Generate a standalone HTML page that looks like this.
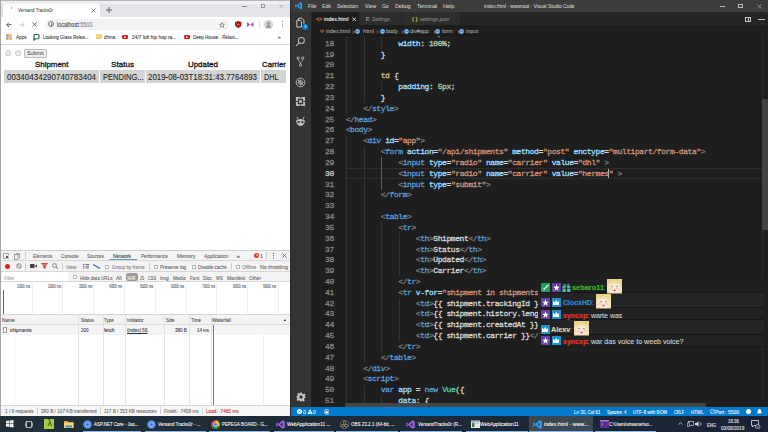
<!DOCTYPE html><html><head><meta charset="utf-8"><style>
*{box-sizing:border-box;margin:0;padding:0}
html,body{width:768px;height:432px;overflow:hidden;background:#1e1e1e;font-family:"Liberation Sans",sans-serif}
.a{position:absolute}
.t{position:absolute;white-space:nowrap;line-height:1;transform-origin:0 0;-webkit-text-stroke:0.08px currentColor}
.m{font-family:"Liberation Mono",monospace;font-size:8px;letter-spacing:-0.42px;white-space:pre;-webkit-text-stroke:0.3px currentColor}
</style></head><body><div class="a" style="left:0.00px;top:0.00px;width:291.00px;height:416.00px;background:#fff"></div>
<div class="a" style="left:0.00px;top:0.00px;width:291.00px;height:16.80px;background:#e3e5e8"></div>
<div class="a" style="left:0.00px;top:1.00px;width:291.00px;height:2.50px;background:#eceef1"></div>
<div class="a" style="left:0.00px;top:0.00px;width:291.00px;height:1.00px;background:#b4b6b9"></div>
<div class="a" style="left:3.00px;top:3.50px;width:97.00px;height:14.00px;background:#fff;border-radius:3px 3px 0 0"></div>
<div class="t" style="left:18.10px;top:7.20px;font-size:6.2px;color:#4a4d51;transform:scaleX(0.727)">Versand Tracks0r</div>
<div class="a" style="left:10.60px;top:7.20px;width:0.90px;height:1.60px;background:#9a9a9a"></div>
<svg class="a" style="left:90.50px;top:7.50px" width="5" height="5" viewBox="0 0 10 10"><path d="M1 1 L9 9 M9 1 L1 9" stroke="#555" stroke-width="1.6"/></svg>
<svg class="a" style="left:105.50px;top:7.00px" width="6" height="6" viewBox="0 0 10 10"><path d="M5 0 V10 M0 5 H10" stroke="#555" stroke-width="1.5"/></svg>
<div class="a" style="left:242.00px;top:6.00px;width:4.60px;height:0.80px;background:#8a8a8a"></div>
<div class="a" style="left:260.80px;top:3.80px;width:4.60px;height:4.60px;background:transparent;border:0.8px solid #999"></div>
<svg class="a" style="left:278.80px;top:3.60px" width="4.6" height="4.6" viewBox="0 0 10 10"><path d="M1 1 L9 9 M9 1 L1 9" stroke="#999" stroke-width="1.1"/></svg>
<svg class="a" style="left:6.00px;top:21.50px" width="6" height="5.5" viewBox="0 0 12 11"><path d="M11 5.5 H2 M6 1 L1.5 5.5 L6 10" fill="none" stroke="#444" stroke-width="1.8"/></svg>
<svg class="a" style="left:19.00px;top:21.50px" width="6" height="5.5" viewBox="0 0 12 11"><path d="M1 5.5 H10 M6 1 L10.5 5.5 L6 10" fill="none" stroke="#b8b8b8" stroke-width="1.5"/></svg>
<svg class="a" style="left:32.00px;top:22.00px" width="5.3" height="5" viewBox="0 0 10 10"><path d="M1 1 L9 9 M9 1 L1 9" stroke="#444" stroke-width="1.6"/></svg>
<div class="a" style="left:44.50px;top:19.00px;width:184.00px;height:10.80px;background:#f1f3f4;border-radius:5.4px"></div>
<div class="a" style="left:48.20px;top:21.40px;width:6.00px;height:6.00px;background:transparent;border:0.8px solid #777;border-radius:50%"></div>
<div class="a" style="left:50.80px;top:23.30px;width:0.70px;height:2.50px;background:#777"></div>
<div class="t" style="left:57.00px;top:22.00px;font-size:6.6px;color:#3c3c3c;transform:scaleX(0.834)">localhost<span style="color:#80868b">:5500</span></div>
<svg class="a" style="left:218.50px;top:21.50px" width="6" height="6" viewBox="0 0 24 24"><path d="M12 2 L15 9 L22 9.5 L16.5 14 L18.5 21.5 L12 17.5 L5.5 21.5 L7.5 14 L2 9.5 L9 9 Z" fill="none" stroke="#555" stroke-width="2.2"/></svg>
<svg class="a" style="left:235.00px;top:21.00px" width="6.5" height="7" viewBox="0 0 12 13"><path d="M6 0 L12 2 V6 C12 10 9 12 6 13 C3 12 0 10 0 6 V2 Z" fill="#b3131b"/><path d="M3 5 L6 8 L9 5" stroke="#fff" stroke-width="1" fill="none"/></svg>
<svg class="a" style="left:247.00px;top:21.50px" width="6.5" height="5" viewBox="0 0 13 10"><path d="M0 0 L6.5 5 L0 10 Z M13 0 L6.5 5 L13 10 Z" fill="#9b59d0"/></svg>
<div class="a" style="left:258.50px;top:20.50px;width:0.80px;height:7.00px;background:#dadce0"></div>
<div class="a" style="left:264.00px;top:20.00px;width:8.50px;height:8.50px;background:#d5d5d5;border-radius:50%"></div>
<div class="a" style="left:266.70px;top:21.50px;width:3.00px;height:3.00px;background:#9a9a9a;border-radius:50%"></div>
<div class="a" style="left:265.50px;top:25.00px;width:5.50px;height:2.50px;background:#9a9a9a;border-radius:3px 3px 0 0"></div>
<div class="a" style="left:281.70px;top:21.00px;width:1.30px;height:1.30px;background:#555;box-shadow:0 2.4px #555,0 4.8px #555;border-radius:50%"></div>
<svg class="a" style="left:6.10px;top:34.00px" width="5.8" height="5.8" viewBox="0 0 3 3"><rect x="0" y="0" width="1" height="1" fill="#ee8a7e"/><rect x="1" y="0" width="1" height="1" fill="#f2b06a"/><rect x="2" y="0" width="1" height="1" fill="#f6c96b"/><rect x="0" y="1" width="1" height="1" fill="#8fb3ee"/><rect x="1" y="1" width="1" height="1" fill="#a2c29a"/><rect x="2" y="1" width="1" height="1" fill="#f2b06a"/><rect x="0" y="2" width="1" height="1" fill="#7bbf8a"/><rect x="1" y="2" width="1" height="1" fill="#e6d27a"/><rect x="2" y="2" width="1" height="1" fill="#ee8a7e"/></svg>
<div class="t" style="left:15.60px;top:34.30px;font-size:6px;color:#303134;transform:scaleX(0.774)">Apps</div>
<svg class="a" style="left:33.00px;top:34.00px" width="6.5" height="6.5" viewBox="0 0 13 13"><path d="M2 11.5 V3 C2 1.5 3 1 4.5 1 H9 C11 1 12 2 12 4 V6.5 C12 8.5 11 9.5 9 9.5 H5 L2 12 Z" fill="none" stroke="#1c6b4c" stroke-width="2.4"/></svg>
<div class="t" style="left:42.50px;top:34.30px;font-size:6px;color:#303134;transform:scaleX(0.754)">Looking Glass Relea...</div>
<div class="a" style="left:95.50px;top:34.30px;width:6.00px;height:5.20px;background:#f6d37b;border-radius:0.5px"></div>
<div class="t" style="left:103.80px;top:34.30px;font-size:6px;color:#303134;transform:scaleX(0.781)">china</div>
<div class="a" style="left:121.80px;top:34.80px;width:6.00px;height:4.50px;background:#e62117;border-radius:1.3px"></div>
<svg class="a" style="left:123.90px;top:35.80px" width="2" height="2.5" viewBox="0 0 2 2.5"><path d="M0 0 L2 1.25 L0 2.5Z" fill="#fff"/></svg>
<div class="t" style="left:131.60px;top:34.30px;font-size:6px;color:#303134;transform:scaleX(0.817)">24/7 lofi hip hop ra...</div>
<div class="a" style="left:184.00px;top:34.80px;width:6.00px;height:4.50px;background:#e62117;border-radius:1.3px"></div>
<svg class="a" style="left:186.10px;top:35.80px" width="2" height="2.5" viewBox="0 0 2 2.5"><path d="M0 0 L2 1.25 L0 2.5Z" fill="#fff"/></svg>
<div class="t" style="left:193.00px;top:34.30px;font-size:6px;color:#303134;transform:scaleX(0.755)">Deep House - Relaxi...</div>
<div class="t" style="left:277.50px;top:34.30px;font-size:6px;color:#555">&#xBB;</div>
<div class="a" style="left:0.00px;top:44.00px;width:291.00px;height:0.90px;background:#dadce0"></div>
<svg class="a" style="left:5.00px;top:50.00px" width="6.4" height="6.4" viewBox="0 0 12 12"><circle cx="6" cy="6" r="5" fill="#ececec" stroke="#b4b4b4" stroke-width="1.3"/></svg>
<svg class="a" style="left:15.40px;top:50.00px" width="6.4" height="6.4" viewBox="0 0 12 12"><circle cx="6" cy="6" r="5" fill="#ececec" stroke="#b4b4b4" stroke-width="1.3"/></svg>
<div class="a" style="left:24.20px;top:49.10px;width:22.70px;height:8.60px;background:#efefef;border:0.8px solid #b9b9b9;border-radius:1px"></div>
<div class="t" style="left:27.40px;top:50.70px;font-size:5.9px;color:#333;-webkit-text-stroke:0;transform:scaleX(0.910)">Submit</div>
<div class="t" style="left:35.00px;top:60.80px;font-size:8px;color:#111;-webkit-text-stroke:0.3px #111;transform:scaleX(0.988)">Shipment</div>
<div class="t" style="left:110.80px;top:60.80px;font-size:8px;color:#111;-webkit-text-stroke:0.3px #111;transform:scaleX(1.012)">Status</div>
<div class="t" style="left:187.70px;top:60.80px;font-size:8px;color:#111;-webkit-text-stroke:0.3px #111;transform:scaleX(0.988)">Updated</div>
<div class="t" style="left:261.90px;top:60.80px;font-size:8px;color:#111;-webkit-text-stroke:0.3px #111;transform:scaleX(0.977)">Carrier</div>
<div class="a" style="left:4.20px;top:69.90px;width:94.80px;height:13.50px;background:#d3d3d3"></div>
<div class="t" style="left:6.90px;top:73.60px;font-size:8.2px;color:#222;transform:scaleX(0.978)">00340434290740783404</div>
<div class="a" style="left:100.00px;top:69.90px;width:44.80px;height:13.50px;background:#d3d3d3"></div>
<div class="t" style="left:102.90px;top:73.60px;font-size:8.2px;color:#222;transform:scaleX(0.918)">PENDING...</div>
<div class="a" style="left:146.00px;top:69.90px;width:113.80px;height:13.50px;background:#d3d3d3"></div>
<div class="t" style="left:147.70px;top:73.60px;font-size:8.2px;color:#222;transform:scaleX(0.965)">2019-08-03T18:31:43.7764893</div>
<div class="a" style="left:261.00px;top:69.90px;width:24.80px;height:13.50px;background:#d3d3d3"></div>
<div class="t" style="left:263.60px;top:73.60px;font-size:8.2px;color:#222;transform:scaleX(0.879)">DHL</div>
<div class="a" style="left:0.00px;top:0.00px;width:1.00px;height:416.00px;background:#a6a6a6"></div>
<div class="a" style="left:1.00px;top:250.00px;width:290.00px;height:166.00px;background:#fff"></div>
<div class="a" style="left:1.00px;top:250.00px;width:290.00px;height:11.00px;background:#f3f3f3;border-top:0.8px solid #cfcfcf;border-bottom:0.8px solid #d6d6d6"></div>
<svg class="a" style="left:3.00px;top:253.00px" width="6.5" height="6" viewBox="0 0 13 12"><path d="M6 11 H1 V1 H11 V5" fill="none" stroke="#6e6e6e" stroke-width="1.2"/><path d="M6 5 L12 8 L9.5 9 L11.5 11.5 L10.5 12 L8.5 9.5 L6.5 11 Z" fill="#333"/></svg>
<svg class="a" style="left:14.00px;top:252.50px" width="6" height="7" viewBox="0 0 12 14"><rect x="1" y="3" width="7" height="10" fill="none" stroke="#6e6e6e" stroke-width="1.2"/><path d="M4 1 H11 V11" fill="none" stroke="#6e6e6e" stroke-width="1.2"/></svg>
<div class="a" style="left:24.50px;top:252.00px;width:0.80px;height:7.00px;background:#ccc"></div>
<div class="t" style="left:32.50px;top:253.90px;font-size:5.4px;color:#5f5f5f;transform:scaleX(0.856)">Elements</div>
<div class="t" style="left:60.75px;top:253.90px;font-size:5.4px;color:#5f5f5f;transform:scaleX(0.872)">Console</div>
<div class="t" style="left:87.00px;top:253.90px;font-size:5.4px;color:#5f5f5f;transform:scaleX(0.859)">Sources</div>
<div class="t" style="left:113.25px;top:253.90px;font-size:5.4px;color:#333;transform:scaleX(0.910)">Network</div>
<div class="t" style="left:140.75px;top:253.90px;font-size:5.4px;color:#5f5f5f;transform:scaleX(0.867)">Performance</div>
<div class="t" style="left:176.50px;top:253.90px;font-size:5.4px;color:#5f5f5f;transform:scaleX(0.937)">Memory</div>
<div class="t" style="left:204.00px;top:253.90px;font-size:5.4px;color:#5f5f5f;transform:scaleX(0.919)">Application</div>
<div class="a" style="left:109.00px;top:259.20px;width:27.50px;height:1.30px;background:#5a95dc"></div>
<div class="t" style="left:236.50px;top:252.90px;font-size:6.2px;color:#444">&#xBB;</div>
<div class="a" style="left:254.40px;top:253.20px;width:4.60px;height:4.60px;background:#e53935;border-radius:50%"></div>
<svg class="a" style="left:255.50px;top:254.30px" width="2.4" height="2.4" viewBox="0 0 4 4"><path d="M0.5 0.5 L3.5 3.5 M3.5 0.5 L0.5 3.5" stroke="#fff" stroke-width="1"/></svg>
<div class="t" style="left:260.00px;top:253.60px;font-size:5.4px;color:#555">1</div>
<div class="a" style="left:265.50px;top:252.00px;width:0.80px;height:7.00px;background:#ccc"></div>
<div class="a" style="left:272.70px;top:252.50px;width:1.10px;height:1.10px;background:#555;box-shadow:0 2.2px #555,0 4.4px #555"></div>
<svg class="a" style="left:282.00px;top:253.00px" width="5" height="5" viewBox="0 0 10 10"><path d="M1 1 L9 9 M9 1 L1 9" stroke="#555" stroke-width="1.5"/></svg>
<div class="a" style="left:1.00px;top:261.00px;width:290.00px;height:10.50px;background:#f3f3f3;border-bottom:0.8px solid #d6d6d6"></div>
<div class="a" style="left:4.50px;top:263.50px;width:5.20px;height:5.20px;background:#e0201e;border-radius:50%"></div>
<svg class="a" style="left:15.50px;top:263.00px" width="6" height="6" viewBox="0 0 12 12"><circle cx="6" cy="6" r="4.6" fill="none" stroke="#555" stroke-width="1.3"/><path d="M2.8 2.8 L9.2 9.2" stroke="#555" stroke-width="1.3"/></svg>
<div class="a" style="left:25.00px;top:262.50px;width:0.80px;height:7.00px;background:#ccc"></div>
<svg class="a" style="left:29.50px;top:264.00px" width="7" height="4" viewBox="0 0 14 8"><rect x="0" y="0" width="9" height="8" rx="1" fill="#444"/><path d="M9 4 L14 1 V7 Z" fill="#444"/></svg>
<svg class="a" style="left:40.50px;top:263.00px" width="7" height="6" viewBox="0 0 14 12"><path d="M0 0 H14 L9 6 V12 L5 10 V6 Z" fill="#d9261c"/><path d="M3 1.5 H11 L7 5.5Z" fill="#fff" opacity="0.5"/></svg>
<svg class="a" style="left:51.50px;top:263.00px" width="6.5" height="6.5" viewBox="0 0 13 13"><circle cx="5" cy="5" r="3.8" fill="none" stroke="#555" stroke-width="1.3"/><path d="M8 8 L12 12" stroke="#555" stroke-width="1.6"/></svg>
<div class="a" style="left:62.00px;top:262.50px;width:0.80px;height:7.00px;background:#ccc"></div>
<div class="t" style="left:66.25px;top:264.50px;font-size:5.4px;color:#808080;transform:scaleX(0.878)">View:</div>
<svg class="a" style="left:82.50px;top:264.00px" width="6" height="4.5" viewBox="0 0 12 9"><path d="M0 1 H3 M5 1 H12 M0 4.5 H3 M5 4.5 H12 M0 8 H3 M5 8 H12" stroke="#555" stroke-width="1.6"/></svg>
<svg class="a" style="left:93.00px;top:263.50px" width="7" height="5" viewBox="0 0 14 10"><path d="M0 1 L14 9" stroke="#2a6fd0" stroke-width="2.2"/></svg>
<div class="a" style="left:104.70px;top:264.50px;width:4.20px;height:4.20px;background:#fff;border:0.7px solid #b8b8b8"></div>
<div class="a" style="left:153.70px;top:264.50px;width:4.20px;height:4.20px;background:#fff;border:0.7px solid #b8b8b8"></div>
<div class="a" style="left:192.20px;top:264.50px;width:4.20px;height:4.20px;background:#fff;border:0.7px solid #b8b8b8"></div>
<div class="a" style="left:236.20px;top:264.50px;width:4.20px;height:4.20px;background:#fff;border:0.7px solid #b8b8b8"></div>
<div class="t" style="left:111.75px;top:264.50px;font-size:5.4px;color:#808080;transform:scaleX(0.874)">Group by frame</div>
<div class="a" style="left:148.50px;top:262.50px;width:0.80px;height:7.00px;background:#ccc"></div>
<div class="t" style="left:160.00px;top:264.50px;font-size:5.4px;color:#5f5f5f;transform:scaleX(0.862)">Preserve log</div>
<div class="t" style="left:197.75px;top:264.50px;font-size:5.4px;color:#5f5f5f;transform:scaleX(0.849)">Disable cache</div>
<div class="a" style="left:231.00px;top:262.50px;width:0.80px;height:7.00px;background:#ccc"></div>
<div class="t" style="left:241.50px;top:264.50px;font-size:5.4px;color:#808080;transform:scaleX(0.920)">Offline</div>
<div class="t" style="left:259.75px;top:264.50px;font-size:5.4px;color:#5f5f5f;transform:scaleX(0.963)">No throttling</div>
<div class="a" style="left:1.00px;top:271.50px;width:290.00px;height:10.50px;background:#f3f3f3;border-bottom:0.8px solid #d6d6d6"></div>
<div class="a" style="left:1.50px;top:272.30px;width:66.00px;height:9.00px;background:#fff"></div>
<div class="t" style="left:3.50px;top:275.80px;font-size:5.4px;color:#a0a0a0;transform:scaleX(0.855)">Filter</div>
<div class="a" style="left:73.20px;top:275.00px;width:4.20px;height:4.20px;background:#fff;border:0.7px solid #b8b8b8"></div>
<div class="t" style="left:79.50px;top:275.80px;font-size:5.4px;color:#5f5f5f;transform:scaleX(0.854)">Hide data URLs</div>
<div class="t" style="left:115.50px;top:275.80px;font-size:5.4px;color:#5f5f5f;transform:scaleX(0.917)">All</div>
<div class="a" style="left:125.50px;top:273.30px;width:12.00px;height:8.00px;background:#999999;border-radius:2.5px"></div>
<div class="t" style="left:127.30px;top:275.80px;font-size:5.4px;color:#fff;transform:scaleX(0.729)">XHR</div>
<div class="t" style="left:140.00px;top:275.80px;font-size:5.4px;color:#5f5f5f;transform:scaleX(0.675)">JS</div>
<div class="t" style="left:148.25px;top:275.80px;font-size:5.4px;color:#5f5f5f;transform:scaleX(0.721)">CSS</div>
<div class="t" style="left:160.00px;top:275.80px;font-size:5.4px;color:#5f5f5f;transform:scaleX(0.972)">Img</div>
<div class="t" style="left:173.00px;top:275.80px;font-size:5.4px;color:#5f5f5f;transform:scaleX(0.851)">Media</div>
<div class="t" style="left:189.75px;top:275.80px;font-size:5.4px;color:#5f5f5f;transform:scaleX(0.857)">Font</div>
<div class="t" style="left:203.25px;top:275.80px;font-size:5.4px;color:#5f5f5f;transform:scaleX(0.912)">Doc</div>
<div class="t" style="left:215.75px;top:275.80px;font-size:5.4px;color:#5f5f5f;transform:scaleX(0.806)">WS</div>
<div class="t" style="left:227.00px;top:275.80px;font-size:5.4px;color:#5f5f5f;transform:scaleX(0.896)">Manifest</div>
<div class="t" style="left:249.00px;top:275.80px;font-size:5.4px;color:#5f5f5f;transform:scaleX(0.890)">Other</div>
<div class="a" style="left:31.50px;top:282.50px;width:0.70px;height:31.50px;background:#efefef"></div>
<div class="t" style="left:17.00px;top:284.60px;font-size:4.6px;color:#555;transform:scaleX(0.755)">1000 ms</div>
<div class="a" style="left:62.30px;top:282.50px;width:0.70px;height:31.50px;background:#efefef"></div>
<div class="t" style="left:47.80px;top:284.60px;font-size:4.6px;color:#555;transform:scaleX(0.755)">2000 ms</div>
<div class="a" style="left:93.10px;top:282.50px;width:0.70px;height:31.50px;background:#efefef"></div>
<div class="t" style="left:78.60px;top:284.60px;font-size:4.6px;color:#555;transform:scaleX(0.755)">3000 ms</div>
<div class="a" style="left:123.90px;top:282.50px;width:0.70px;height:31.50px;background:#efefef"></div>
<div class="t" style="left:109.40px;top:284.60px;font-size:4.6px;color:#555;transform:scaleX(0.755)">4000 ms</div>
<div class="a" style="left:154.70px;top:282.50px;width:0.70px;height:31.50px;background:#efefef"></div>
<div class="t" style="left:140.20px;top:284.60px;font-size:4.6px;color:#555;transform:scaleX(0.755)">5000 ms</div>
<div class="a" style="left:185.50px;top:282.50px;width:0.70px;height:31.50px;background:#efefef"></div>
<div class="t" style="left:171.00px;top:284.60px;font-size:4.6px;color:#555;transform:scaleX(0.755)">6000 ms</div>
<div class="a" style="left:216.30px;top:282.50px;width:0.70px;height:31.50px;background:#efefef"></div>
<div class="t" style="left:201.80px;top:284.60px;font-size:4.6px;color:#555;transform:scaleX(0.755)">7000 ms</div>
<div class="a" style="left:247.10px;top:282.50px;width:0.70px;height:31.50px;background:#efefef"></div>
<div class="t" style="left:232.60px;top:284.60px;font-size:4.6px;color:#555;transform:scaleX(0.755)">8000 ms</div>
<div class="a" style="left:277.90px;top:282.50px;width:0.70px;height:31.50px;background:#efefef"></div>
<div class="t" style="left:263.40px;top:284.60px;font-size:4.6px;color:#555;transform:scaleX(0.755)">9000 ms</div>
<div class="a" style="left:2.60px;top:290.00px;width:0.90px;height:24.00px;background:#5a5fae"></div>
<div class="a" style="left:1.00px;top:313.80px;width:290.00px;height:0.80px;background:#d6d6d6"></div>
<div class="a" style="left:1.00px;top:314.50px;width:290.00px;height:10.50px;background:#f3f3f3;border-bottom:0.8px solid #dcdcdc"></div>
<div class="t" style="left:2.00px;top:317.60px;font-size:5.4px;color:#444;transform:scaleX(0.869)">Name</div>
<div class="t" style="left:80.50px;top:317.60px;font-size:5.4px;color:#444;transform:scaleX(0.834)">Status</div>
<div class="t" style="left:104.00px;top:317.60px;font-size:5.4px;color:#444;transform:scaleX(0.834)">Type</div>
<div class="t" style="left:127.00px;top:317.60px;font-size:5.4px;color:#444;transform:scaleX(0.933)">Initiator</div>
<div class="t" style="left:165.75px;top:317.60px;font-size:5.4px;color:#444;transform:scaleX(0.810)">Size</div>
<div class="t" style="left:191.00px;top:317.60px;font-size:5.4px;color:#444;transform:scaleX(0.849)">Time</div>
<div class="t" style="left:212.25px;top:317.60px;font-size:5.4px;color:#444;transform:scaleX(0.890)">Waterfall</div>
<svg class="a" style="left:282.80px;top:318.60px" width="3.8" height="2.8" viewBox="0 0 10 7"><path d="M0 7 L5 0 L10 7Z" fill="#444"/></svg>
<div class="a" style="left:1.00px;top:325.00px;width:290.00px;height:9.60px;background:#f5f5f5"></div>
<div class="a" style="left:78.20px;top:314.50px;width:0.80px;height:90.50px;background:#e3e3e3"></div>
<div class="a" style="left:102.60px;top:314.50px;width:0.80px;height:90.50px;background:#e3e3e3"></div>
<div class="a" style="left:125.20px;top:314.50px;width:0.80px;height:90.50px;background:#e3e3e3"></div>
<div class="a" style="left:164.30px;top:314.50px;width:0.80px;height:90.50px;background:#e3e3e3"></div>
<div class="a" style="left:188.50px;top:314.50px;width:0.80px;height:90.50px;background:#e3e3e3"></div>
<div class="a" style="left:210.60px;top:314.50px;width:0.80px;height:90.50px;background:#e3e3e3"></div>
<div class="a" style="left:14.00px;top:334.60px;width:0.60px;height:70.00px;background:#f2f2f2"></div>
<div class="a" style="left:263.00px;top:334.60px;width:0.60px;height:70.00px;background:#f0f0f0"></div>
<div class="a" style="left:3.20px;top:326.50px;width:4.30px;height:6.00px;background:#fff;border:0.7px solid #9a9a9a"></div>
<div class="t" style="left:9.50px;top:327.80px;font-size:5.4px;color:#333;transform:scaleX(0.885)">shipments</div>
<div class="t" style="left:80.50px;top:327.80px;font-size:5.4px;color:#333;transform:scaleX(0.833)">200</div>
<div class="t" style="left:104.00px;top:327.80px;font-size:5.4px;color:#333;transform:scaleX(0.898)">fetch</div>
<div class="t" style="left:127.00px;top:327.80px;font-size:5.4px;color:#333;text-decoration:underline;transform:scaleX(0.855)">(index):56</div>
<div class="t" style="left:175.10px;top:327.80px;font-size:5.4px;color:#333;transform:scaleX(0.844)">380 B</div>
<div class="t" style="left:196.50px;top:327.80px;font-size:5.4px;color:#333;transform:scaleX(0.817)">14 ms</div>
<div class="a" style="left:212.60px;top:325.00px;width:0.90px;height:80.00px;background:#8763a6"></div>
<div class="a" style="left:1.00px;top:404.60px;width:290.00px;height:11.40px;background:#f6f6f6;border-top:0.8px solid #d8d8d8"></div>
<div class="t" style="left:4.50px;top:408.50px;font-size:5.4px;color:#5f5f5f;transform:scaleX(0.880)">1 / 9 requests</div>
<div class="t" style="left:40.75px;top:408.50px;font-size:5.4px;color:#5f5f5f;transform:scaleX(0.870)">380 B / 107 KB transferred</div>
<div class="t" style="left:103.75px;top:408.50px;font-size:5.4px;color:#5f5f5f;transform:scaleX(0.860)">117 B / 353 KB resources</div>
<div class="t" style="left:163.75px;top:408.50px;font-size:5.4px;color:#5f5f5f;transform:scaleX(0.866)">Finish: -7458 ms</div>
<div class="t" style="left:206.00px;top:408.50px;font-size:5.4px;color:#c5221f;transform:scaleX(0.867)">Load: -7465 ms</div>
<div class="a" style="left:37.00px;top:407.00px;width:0.80px;height:7.00px;background:#d0d0d0"></div>
<div class="a" style="left:100.00px;top:407.00px;width:0.80px;height:7.00px;background:#d0d0d0"></div>
<div class="a" style="left:160.00px;top:407.00px;width:0.80px;height:7.00px;background:#d0d0d0"></div>
<div class="a" style="left:201.80px;top:407.00px;width:0.80px;height:7.00px;background:#d0d0d0"></div>
<div class="a" style="left:290.00px;top:0.00px;width:478.00px;height:416.00px;background:#1e1e1e"></div>
<div class="a" style="left:290.00px;top:0.00px;width:478.00px;height:12.00px;background:#3c3c3c"></div>
<div class="a" style="left:290.00px;top:0.00px;width:1.20px;height:416.00px;background:#2b2b2b"></div>
<svg class="a" style="left:294.80px;top:2.00px" width="7.5" height="7.5" viewBox="0 0 24 24"><path d="M17.5 0.5 L23.5 3.3 V20.7 L17.5 23.5 L6.8 13.7 L2.2 17.2 L0.5 16.3 V7.7 L2.2 6.8 L6.8 10.3 Z M17.5 6.5 L11.3 12 L17.5 17.5 Z M2.8 9.5 V14.5 L5.3 12 Z" fill="#22a0f0" fill-rule="evenodd"/></svg>
<div class="t" style="left:307.50px;top:3.90px;font-size:5.6px;color:#cccccc;transform:scaleX(0.943)">File</div>
<div class="t" style="left:322.00px;top:3.90px;font-size:5.6px;color:#cccccc;transform:scaleX(0.908)">Edit</div>
<div class="t" style="left:337.00px;top:3.90px;font-size:5.6px;color:#cccccc;transform:scaleX(0.912)">Selection</div>
<div class="t" style="left:364.50px;top:3.90px;font-size:5.6px;color:#cccccc;transform:scaleX(0.935)">View</div>
<div class="t" style="left:381.90px;top:3.90px;font-size:5.6px;color:#cccccc;transform:scaleX(0.884)">Go</div>
<div class="t" style="left:394.50px;top:3.90px;font-size:5.6px;color:#cccccc;transform:scaleX(0.940)">Debug</div>
<div class="t" style="left:416.50px;top:3.90px;font-size:5.6px;color:#cccccc;transform:scaleX(0.946)">Terminal</div>
<div class="t" style="left:442.75px;top:3.90px;font-size:5.6px;color:#cccccc;transform:scaleX(0.977)">Help</div>
<div class="t" style="left:484.00px;top:3.90px;font-size:5.6px;color:#cccccc;transform:scaleX(0.865)">index.html - wwwroot - Visual Studio Code</div>
<div class="a" style="left:719.50px;top:5.60px;width:5.00px;height:0.90px;background:#bbb"></div>
<div class="a" style="left:738.00px;top:3.50px;width:4.80px;height:4.80px;background:transparent;border:0.9px solid #bbb"></div>
<svg class="a" style="left:756.50px;top:3.50px" width="5" height="5" viewBox="0 0 10 10"><path d="M1 1 L9 9 M9 1 L1 9" stroke="#bbb" stroke-width="1.3"/></svg>
<div class="a" style="left:291.00px;top:12.00px;width:20.00px;height:394.70px;background:#333333"></div>
<svg class="a" style="left:295.00px;top:17.00px" width="11" height="11" viewBox="0 0 24 24"><path d="M8 7 V2.5 H14.5 L19.5 7.5 V15" fill="none" stroke="#dcdcdc" stroke-width="2"/><path d="M4 7 H11 L14 10 V22 H4 Z" fill="none" stroke="#dcdcdc" stroke-width="2"/></svg>
<div class="a" style="left:302.20px;top:24.30px;width:6.20px;height:6.20px;background:#007acc;border-radius:50%"></div>
<div class="t" style="left:304.30px;top:25.40px;font-size:4px;color:#fff">1</div>
<svg class="a" style="left:295.00px;top:35.50px" width="11" height="11" viewBox="0 0 24 24"><circle cx="14" cy="10" r="6.5" fill="none" stroke="#bdbdbd" stroke-width="2.2"/><path d="M9.5 14.5 L2.5 21.5" stroke="#bdbdbd" stroke-width="2.6"/></svg>
<svg class="a" style="left:295.00px;top:55.50px" width="11" height="11" viewBox="0 0 24 24"><circle cx="7" cy="4.5" r="2.5" fill="none" stroke="#bdbdbd" stroke-width="1.8"/><circle cx="17" cy="4.5" r="2.5" fill="none" stroke="#bdbdbd" stroke-width="1.8"/><circle cx="12" cy="20" r="2.5" fill="none" stroke="#bdbdbd" stroke-width="1.8"/><path d="M7 7 C7 12 12 12 12 17.5 M17 7 C17 12 12 12 12 17.5" fill="none" stroke="#bdbdbd" stroke-width="1.8"/></svg>
<svg class="a" style="left:295.00px;top:76.50px" width="11" height="11" viewBox="0 0 24 24"><circle cx="12" cy="12" r="9.5" fill="none" stroke="#bdbdbd" stroke-width="2"/><path d="M5.3 5.3 L18.7 18.7" stroke="#bdbdbd" stroke-width="1.8"/><circle cx="12" cy="12" r="4.5" fill="none" stroke="#bdbdbd" stroke-width="1.8"/><path d="M12 5 V19 M5 12 H19" stroke="#bdbdbd" stroke-width="1.2"/></svg>
<svg class="a" style="left:295.00px;top:95.50px" width="11" height="11" viewBox="0 0 24 24"><path d="M2 2 H22 V22 H2 Z M6 6 V18 H18 V6 Z" fill="#bdbdbd" fill-rule="evenodd"/><rect x="9" y="9" width="6" height="6" fill="#bdbdbd"/><path d="M12 0 V5 M12 19 V24 M0 12 H5 M19 12 H24" stroke="#333" stroke-width="2.5"/></svg>
<svg class="a" style="left:295.00px;top:115.50px" width="11" height="11" viewBox="0 0 24 24"><path d="M2.5 11 C2.5 5 21.5 5 21.5 11 C21.5 17.5 15.5 22 12 22 C8.5 22 2.5 17.5 2.5 11 Z" fill="#bdbdbd"/><path d="M6.5 6.5 L4 1.5 M17.5 6.5 L20 1.5" stroke="#bdbdbd" stroke-width="2"/><ellipse cx="8" cy="13" rx="2.8" ry="2.2" fill="#333"/><ellipse cx="16" cy="13" rx="2.8" ry="2.2" fill="#333"/></svg>
<svg class="a" style="left:295.50px;top:392.00px" width="10" height="10" viewBox="0 0 24 24"><path d="M10 1 H14 L14.7 4.3 L17.3 5.4 L20.1 3.5 L22.9 6.4 L21.1 9.2 L22.1 11.8 L23.5 12 V14 L20.5 14.5 L19.5 17.3 L21.1 20.1 L18.3 22.9 L15.5 21.1 L13 22.1 L12.5 23.5 H10.5 L9.8 20.5 L7.2 19.5 L4.4 21.3 L1.6 18.5 L3.4 15.7 L2.4 13.2 L0.5 12.7 V10.5 L3.5 9.8 L4.5 7.2 L2.7 4.4 L5.5 1.6 L8.3 3.4 L10.8 2.4 Z" fill="#c5c5c5"/><circle cx="12" cy="12" r="4" fill="#333"/></svg>
<div class="a" style="left:311.00px;top:12.00px;width:457.00px;height:13.40px;background:#252526"></div>
<div class="a" style="left:311.50px;top:12.00px;width:47.50px;height:13.40px;background:#1e1e1e"></div>
<div class="a" style="left:359.20px;top:12.00px;width:42.30px;height:13.40px;background:#2d2d2d"></div>
<div class="a" style="left:402.20px;top:12.00px;width:57.40px;height:13.40px;background:#2d2d2d"></div>
<div class="t" style="left:315.50px;top:16.70px;font-size:5.5px;color:#e37933;font-weight:bold;transform:scaleX(0.932)">&lt;&gt;</div>
<div class="t" style="left:323.50px;top:16.70px;font-size:5.7px;color:#ffffff;transform:scaleX(0.945)">index.html</div>
<svg class="a" style="left:351.50px;top:16.80px" width="4.5" height="4.5" viewBox="0 0 10 10"><path d="M1 1 L9 9 M9 1 L1 9" stroke="#e0e0e0" stroke-width="2"/></svg>
<svg class="a" style="left:365.80px;top:16.50px" width="4.2" height="4.5" viewBox="0 0 8 9"><path d="M0 1 H8 M0 4.5 H6 M0 8 H8" stroke="#9a9a9a" stroke-width="1.4"/><path d="M1 0 V9" stroke="#9a9a9a" stroke-width="1.4"/></svg>
<div class="t" style="left:371.50px;top:16.70px;font-size:5.7px;color:#8b8b8b;font-style:italic;transform:scaleX(0.880)">Settings</div>
<div class="t" style="left:412.00px;top:16.50px;font-size:5.7px;color:#cbcb41;font-weight:bold;transform:scaleX(0.914)">{ }</div>
<div class="t" style="left:419.80px;top:16.70px;font-size:5.7px;color:#8b8b8b;transform:scaleX(0.930)">settings.json</div>
<div class="a" style="left:745.00px;top:17.00px;width:6.40px;height:5.40px;background:transparent;border:0.9px solid #c5c5c5;border-top-width:1.4px"></div>
<div class="a" style="left:747.80px;top:17.00px;width:0.90px;height:5.40px;background:#c5c5c5"></div>
<div class="a" style="left:757.50px;top:18.70px;width:7.00px;height:1.30px;background:#c5c5c5"></div>
<div class="a" style="left:311.00px;top:25.40px;width:457.00px;height:10.00px;background:#1e1e1e"></div>
<div class="a" style="left:311.00px;top:34.80px;width:451.00px;height:1.20px;background:#151515;opacity:0.6"></div>
<div class="t" style="left:319.80px;top:28.90px;font-size:5.2px;color:#e37933;font-weight:bold;transform:scaleX(0.627)">&lt;&gt;</div>
<div class="t" style="left:325.60px;top:28.90px;font-size:5.6px;color:#a9a9a9;transform:scaleX(0.941)">index.html</div>
<svg class="a" style="left:351.50px;top:29.50px" width="3" height="4" viewBox="0 0 6 8"><path d="M1.5 1 L4.5 4 L1.5 7" fill="none" stroke="#a9a9a9" stroke-width="1.3"/></svg>
<div class="t" style="left:362.50px;top:28.90px;font-size:5.6px;color:#a9a9a9;transform:scaleX(1.040)">html</div>
<svg class="a" style="left:376.00px;top:29.50px" width="3" height="4" viewBox="0 0 6 8"><path d="M1.5 1 L4.5 4 L1.5 7" fill="none" stroke="#a9a9a9" stroke-width="1.3"/></svg>
<div class="t" style="left:386.00px;top:28.90px;font-size:5.6px;color:#a9a9a9;transform:scaleX(0.968)">body</div>
<svg class="a" style="left:401.00px;top:29.50px" width="3" height="4" viewBox="0 0 6 8"><path d="M1.5 1 L4.5 4 L1.5 7" fill="none" stroke="#a9a9a9" stroke-width="1.3"/></svg>
<div class="t" style="left:410.25px;top:28.90px;font-size:5.6px;color:#a9a9a9;transform:scaleX(0.956)">div#app</div>
<svg class="a" style="left:433.00px;top:29.50px" width="3" height="4" viewBox="0 0 6 8"><path d="M1.5 1 L4.5 4 L1.5 7" fill="none" stroke="#a9a9a9" stroke-width="1.3"/></svg>
<div class="t" style="left:442.00px;top:28.90px;font-size:5.6px;color:#a9a9a9;transform:scaleX(0.961)">form</div>
<svg class="a" style="left:456.50px;top:29.50px" width="3" height="4" viewBox="0 0 6 8"><path d="M1.5 1 L4.5 4 L1.5 7" fill="none" stroke="#a9a9a9" stroke-width="1.3"/></svg>
<div class="t" style="left:465.75px;top:28.90px;font-size:5.6px;color:#a9a9a9;transform:scaleX(0.988)">input</div>
<svg class="a" style="left:355.00px;top:28.70px" width="5" height="5" viewBox="0 0 10 10"><circle cx="5" cy="5" r="4.8" fill="#75beff"/><path d="M1.5 3.5 L5 5.5 L8.5 3.5" fill="none" stroke="#1e1e1e" stroke-width="1"/></svg>
<svg class="a" style="left:379.50px;top:28.70px" width="5" height="5" viewBox="0 0 10 10"><circle cx="5" cy="5" r="4.8" fill="#75beff"/><path d="M1.5 3.5 L5 5.5 L8.5 3.5" fill="none" stroke="#1e1e1e" stroke-width="1"/></svg>
<svg class="a" style="left:404.00px;top:28.70px" width="5" height="5" viewBox="0 0 10 10"><circle cx="5" cy="5" r="4.8" fill="#75beff"/><path d="M1.5 3.5 L5 5.5 L8.5 3.5" fill="none" stroke="#1e1e1e" stroke-width="1"/></svg>
<svg class="a" style="left:435.25px;top:28.70px" width="5" height="5" viewBox="0 0 10 10"><circle cx="5" cy="5" r="4.8" fill="#75beff"/><path d="M1.5 3.5 L5 5.5 L8.5 3.5" fill="none" stroke="#1e1e1e" stroke-width="1"/></svg>
<svg class="a" style="left:459.00px;top:28.70px" width="5" height="5" viewBox="0 0 10 10"><circle cx="5" cy="5" r="4.8" fill="#75beff"/><path d="M1.5 3.5 L5 5.5 L8.5 3.5" fill="none" stroke="#1e1e1e" stroke-width="1"/></svg>
<div class="a" style="left:311px;top:36px;width:451px;height:367px;overflow:hidden">
<div class="a" style="left:34.50px;top:132.00px;width:416.50px;height:10.83px;background:transparent;border-top:0.8px solid #2e2e2e;border-bottom:0.8px solid #2e2e2e"></div>
<div class="a" style="left:35.00px;top:-8.79px;width:0.80px;height:10.93px;background:#333333"></div>
<div class="a" style="left:52.52px;top:-8.79px;width:0.80px;height:10.93px;background:#333333"></div>
<div class="a" style="left:70.04px;top:-8.79px;width:0.80px;height:10.93px;background:#333333"></div>
<div class="a" style="left:35.00px;top:2.04px;width:0.80px;height:10.93px;background:#333333"></div>
<div class="a" style="left:52.52px;top:2.04px;width:0.80px;height:10.93px;background:#333333"></div>
<div class="a" style="left:70.04px;top:2.04px;width:0.80px;height:10.93px;background:#333333"></div>
<div class="a" style="left:35.00px;top:12.87px;width:0.80px;height:10.93px;background:#333333"></div>
<div class="a" style="left:52.52px;top:12.87px;width:0.80px;height:10.93px;background:#333333"></div>
<div class="a" style="left:35.00px;top:23.70px;width:0.80px;height:10.93px;background:#333333"></div>
<div class="a" style="left:52.52px;top:23.70px;width:0.80px;height:10.93px;background:#333333"></div>
<div class="a" style="left:35.00px;top:34.53px;width:0.80px;height:10.93px;background:#333333"></div>
<div class="a" style="left:52.52px;top:34.53px;width:0.80px;height:10.93px;background:#333333"></div>
<div class="a" style="left:35.00px;top:45.36px;width:0.80px;height:10.93px;background:#333333"></div>
<div class="a" style="left:52.52px;top:45.36px;width:0.80px;height:10.93px;background:#333333"></div>
<div class="a" style="left:70.04px;top:45.36px;width:0.80px;height:10.93px;background:#333333"></div>
<div class="a" style="left:35.00px;top:56.19px;width:0.80px;height:10.93px;background:#333333"></div>
<div class="a" style="left:52.52px;top:56.19px;width:0.80px;height:10.93px;background:#333333"></div>
<div class="a" style="left:35.00px;top:67.02px;width:0.80px;height:10.93px;background:#333333"></div>
<div class="a" style="left:35.00px;top:99.51px;width:0.80px;height:10.93px;background:#333333"></div>
<div class="a" style="left:35.00px;top:110.34px;width:0.80px;height:10.93px;background:#333333"></div>
<div class="a" style="left:52.52px;top:110.34px;width:0.80px;height:10.93px;background:#333333"></div>
<div class="a" style="left:35.00px;top:121.17px;width:0.80px;height:10.93px;background:#333333"></div>
<div class="a" style="left:52.52px;top:121.17px;width:0.80px;height:10.93px;background:#333333"></div>
<div class="a" style="left:70.04px;top:121.17px;width:0.80px;height:10.93px;background:#606060"></div>
<div class="a" style="left:35.00px;top:132.00px;width:0.80px;height:10.93px;background:#333333"></div>
<div class="a" style="left:52.52px;top:132.00px;width:0.80px;height:10.93px;background:#333333"></div>
<div class="a" style="left:70.04px;top:132.00px;width:0.80px;height:10.93px;background:#606060"></div>
<div class="a" style="left:35.00px;top:142.83px;width:0.80px;height:10.93px;background:#333333"></div>
<div class="a" style="left:52.52px;top:142.83px;width:0.80px;height:10.93px;background:#333333"></div>
<div class="a" style="left:70.04px;top:142.83px;width:0.80px;height:10.93px;background:#606060"></div>
<div class="a" style="left:35.00px;top:153.66px;width:0.80px;height:10.93px;background:#333333"></div>
<div class="a" style="left:52.52px;top:153.66px;width:0.80px;height:10.93px;background:#333333"></div>
<div class="a" style="left:35.00px;top:164.49px;width:0.80px;height:10.93px;background:#333333"></div>
<div class="a" style="left:52.52px;top:164.49px;width:0.80px;height:10.93px;background:#333333"></div>
<div class="a" style="left:35.00px;top:175.32px;width:0.80px;height:10.93px;background:#333333"></div>
<div class="a" style="left:52.52px;top:175.32px;width:0.80px;height:10.93px;background:#333333"></div>
<div class="a" style="left:35.00px;top:186.15px;width:0.80px;height:10.93px;background:#333333"></div>
<div class="a" style="left:52.52px;top:186.15px;width:0.80px;height:10.93px;background:#333333"></div>
<div class="a" style="left:70.04px;top:186.15px;width:0.80px;height:10.93px;background:#333333"></div>
<div class="a" style="left:35.00px;top:196.98px;width:0.80px;height:10.93px;background:#333333"></div>
<div class="a" style="left:52.52px;top:196.98px;width:0.80px;height:10.93px;background:#333333"></div>
<div class="a" style="left:70.04px;top:196.98px;width:0.80px;height:10.93px;background:#333333"></div>
<div class="a" style="left:87.56px;top:196.98px;width:0.80px;height:10.93px;background:#333333"></div>
<div class="a" style="left:35.00px;top:207.81px;width:0.80px;height:10.93px;background:#333333"></div>
<div class="a" style="left:52.52px;top:207.81px;width:0.80px;height:10.93px;background:#333333"></div>
<div class="a" style="left:70.04px;top:207.81px;width:0.80px;height:10.93px;background:#333333"></div>
<div class="a" style="left:87.56px;top:207.81px;width:0.80px;height:10.93px;background:#333333"></div>
<div class="a" style="left:35.00px;top:218.64px;width:0.80px;height:10.93px;background:#333333"></div>
<div class="a" style="left:52.52px;top:218.64px;width:0.80px;height:10.93px;background:#333333"></div>
<div class="a" style="left:70.04px;top:218.64px;width:0.80px;height:10.93px;background:#333333"></div>
<div class="a" style="left:87.56px;top:218.64px;width:0.80px;height:10.93px;background:#333333"></div>
<div class="a" style="left:35.00px;top:229.47px;width:0.80px;height:10.93px;background:#333333"></div>
<div class="a" style="left:52.52px;top:229.47px;width:0.80px;height:10.93px;background:#333333"></div>
<div class="a" style="left:70.04px;top:229.47px;width:0.80px;height:10.93px;background:#333333"></div>
<div class="a" style="left:87.56px;top:229.47px;width:0.80px;height:10.93px;background:#333333"></div>
<div class="a" style="left:35.00px;top:240.30px;width:0.80px;height:10.93px;background:#333333"></div>
<div class="a" style="left:52.52px;top:240.30px;width:0.80px;height:10.93px;background:#333333"></div>
<div class="a" style="left:70.04px;top:240.30px;width:0.80px;height:10.93px;background:#333333"></div>
<div class="a" style="left:35.00px;top:251.13px;width:0.80px;height:10.93px;background:#333333"></div>
<div class="a" style="left:52.52px;top:251.13px;width:0.80px;height:10.93px;background:#333333"></div>
<div class="a" style="left:70.04px;top:251.13px;width:0.80px;height:10.93px;background:#333333"></div>
<div class="a" style="left:35.00px;top:261.96px;width:0.80px;height:10.93px;background:#333333"></div>
<div class="a" style="left:52.52px;top:261.96px;width:0.80px;height:10.93px;background:#333333"></div>
<div class="a" style="left:70.04px;top:261.96px;width:0.80px;height:10.93px;background:#333333"></div>
<div class="a" style="left:87.56px;top:261.96px;width:0.80px;height:10.93px;background:#333333"></div>
<div class="a" style="left:35.00px;top:272.79px;width:0.80px;height:10.93px;background:#333333"></div>
<div class="a" style="left:52.52px;top:272.79px;width:0.80px;height:10.93px;background:#333333"></div>
<div class="a" style="left:70.04px;top:272.79px;width:0.80px;height:10.93px;background:#333333"></div>
<div class="a" style="left:87.56px;top:272.79px;width:0.80px;height:10.93px;background:#333333"></div>
<div class="a" style="left:35.00px;top:283.62px;width:0.80px;height:10.93px;background:#333333"></div>
<div class="a" style="left:52.52px;top:283.62px;width:0.80px;height:10.93px;background:#333333"></div>
<div class="a" style="left:70.04px;top:283.62px;width:0.80px;height:10.93px;background:#333333"></div>
<div class="a" style="left:87.56px;top:283.62px;width:0.80px;height:10.93px;background:#333333"></div>
<div class="a" style="left:35.00px;top:294.45px;width:0.80px;height:10.93px;background:#333333"></div>
<div class="a" style="left:52.52px;top:294.45px;width:0.80px;height:10.93px;background:#333333"></div>
<div class="a" style="left:70.04px;top:294.45px;width:0.80px;height:10.93px;background:#333333"></div>
<div class="a" style="left:87.56px;top:294.45px;width:0.80px;height:10.93px;background:#333333"></div>
<div class="a" style="left:35.00px;top:305.28px;width:0.80px;height:10.93px;background:#333333"></div>
<div class="a" style="left:52.52px;top:305.28px;width:0.80px;height:10.93px;background:#333333"></div>
<div class="a" style="left:70.04px;top:305.28px;width:0.80px;height:10.93px;background:#333333"></div>
<div class="a" style="left:35.00px;top:316.11px;width:0.80px;height:10.93px;background:#333333"></div>
<div class="a" style="left:52.52px;top:316.11px;width:0.80px;height:10.93px;background:#333333"></div>
<div class="a" style="left:35.00px;top:326.94px;width:0.80px;height:10.93px;background:#333333"></div>
<div class="a" style="left:35.00px;top:337.77px;width:0.80px;height:10.93px;background:#333333"></div>
<div class="a" style="left:35.00px;top:348.60px;width:0.80px;height:10.93px;background:#333333"></div>
<div class="a" style="left:52.52px;top:348.60px;width:0.80px;height:10.93px;background:#333333"></div>
<div class="a" style="left:35.00px;top:359.43px;width:0.80px;height:10.93px;background:#333333"></div>
<div class="a" style="left:52.52px;top:359.43px;width:0.80px;height:10.93px;background:#333333"></div>
<div class="a" style="left:70.04px;top:359.43px;width:0.80px;height:10.93px;background:#333333"></div>
<div class="a" style="left:35.00px;top:370.26px;width:0.80px;height:10.93px;background:#333333"></div>
<div class="a" style="left:52.52px;top:370.26px;width:0.80px;height:10.93px;background:#333333"></div>
<div class="a" style="left:70.04px;top:370.26px;width:0.80px;height:10.93px;background:#333333"></div>
<div class="a" style="left:87.56px;top:370.26px;width:0.80px;height:10.93px;background:#333333"></div>
<div class="t m" style="left:-1.1999999999999886px;top:-7.09px;width:24px;text-align:right;font-weight:normal;color:#858585">17</div>
<div class="t m" style="left:34.70px;top:-7.09px"><span style="color:#d4d4d4">            </span><span style="color:#9cdcfe">border</span><span style="color:#d4d4d4">: </span><span style="color:#b5cea8">1px</span><span style="color:#d4d4d4">;</span></div>
<div class="t m" style="left:-1.1999999999999886px;top:3.74px;width:24px;text-align:right;font-weight:normal;color:#858585">18</div>
<div class="t m" style="left:34.70px;top:3.74px"><span style="color:#d4d4d4">            </span><span style="color:#9cdcfe">width</span><span style="color:#d4d4d4">: </span><span style="color:#b5cea8">100%</span><span style="color:#d4d4d4">;</span></div>
<div class="t m" style="left:-1.1999999999999886px;top:14.57px;width:24px;text-align:right;font-weight:normal;color:#858585">19</div>
<div class="t m" style="left:34.70px;top:14.57px"><span style="color:#d4d4d4">        }</span></div>
<div class="t m" style="left:-1.1999999999999886px;top:25.40px;width:24px;text-align:right;font-weight:normal;color:#858585">20</div>
<div class="t m" style="left:34.70px;top:25.40px"></div>
<div class="t m" style="left:-1.1999999999999886px;top:36.23px;width:24px;text-align:right;font-weight:normal;color:#858585">21</div>
<div class="t m" style="left:34.70px;top:36.23px"><span style="color:#d4d4d4">        </span><span style="color:#d7ba7d">td</span><span style="color:#d4d4d4"> {</span></div>
<div class="t m" style="left:-1.1999999999999886px;top:47.06px;width:24px;text-align:right;font-weight:normal;color:#858585">22</div>
<div class="t m" style="left:34.70px;top:47.06px"><span style="color:#d4d4d4">            </span><span style="color:#9cdcfe">padding</span><span style="color:#d4d4d4">: </span><span style="color:#b5cea8">5px</span><span style="color:#d4d4d4">;</span></div>
<div class="t m" style="left:-1.1999999999999886px;top:57.89px;width:24px;text-align:right;font-weight:normal;color:#858585">23</div>
<div class="t m" style="left:34.70px;top:57.89px"><span style="color:#d4d4d4">        }</span></div>
<div class="t m" style="left:-1.1999999999999886px;top:68.72px;width:24px;text-align:right;font-weight:normal;color:#858585">24</div>
<div class="t m" style="left:34.70px;top:68.72px"><span style="color:#d4d4d4">    </span><span style="color:#808080">&lt;/</span><span style="color:#569cd6">style</span><span style="color:#808080">&gt;</span></div>
<div class="t m" style="left:-1.1999999999999886px;top:79.55px;width:24px;text-align:right;font-weight:normal;color:#858585">25</div>
<div class="t m" style="left:34.70px;top:79.55px"><span style="color:#808080">&lt;/</span><span style="color:#569cd6">head</span><span style="color:#808080">&gt;</span></div>
<div class="t m" style="left:-1.1999999999999886px;top:90.38px;width:24px;text-align:right;font-weight:normal;color:#858585">26</div>
<div class="t m" style="left:34.70px;top:90.38px"><span style="color:#808080">&lt;</span><span style="color:#569cd6">body</span><span style="color:#808080">&gt;</span></div>
<div class="t m" style="left:-1.1999999999999886px;top:101.21px;width:24px;text-align:right;font-weight:normal;color:#858585">27</div>
<div class="t m" style="left:34.70px;top:101.21px"><span style="color:#d4d4d4">    </span><span style="color:#808080">&lt;</span><span style="color:#569cd6">div</span><span style="color:#d4d4d4"> </span><span style="color:#9cdcfe">id</span><span style="color:#d4d4d4">=</span><span style="color:#ce9178">"app"</span><span style="color:#808080">&gt;</span></div>
<div class="t m" style="left:-1.1999999999999886px;top:112.04px;width:24px;text-align:right;font-weight:normal;color:#858585">28</div>
<div class="t m" style="left:34.70px;top:112.04px"><span style="color:#d4d4d4">        </span><span style="color:#808080">&lt;</span><span style="color:#569cd6">form</span><span style="color:#d4d4d4"> </span><span style="color:#9cdcfe">action</span><span style="color:#d4d4d4">=</span><span style="color:#ce9178">"/api/shipments"</span><span style="color:#d4d4d4"> </span><span style="color:#9cdcfe">method</span><span style="color:#d4d4d4">=</span><span style="color:#ce9178">"post"</span><span style="color:#d4d4d4"> </span><span style="color:#9cdcfe">enctype</span><span style="color:#d4d4d4">=</span><span style="color:#ce9178">"multipart/form-data"</span><span style="color:#808080">&gt;</span></div>
<div class="t m" style="left:-1.1999999999999886px;top:122.87px;width:24px;text-align:right;font-weight:normal;color:#858585">29</div>
<div class="t m" style="left:34.70px;top:122.87px"><span style="color:#d4d4d4">            </span><span style="color:#808080">&lt;</span><span style="color:#569cd6">input</span><span style="color:#d4d4d4"> </span><span style="color:#9cdcfe">type</span><span style="color:#d4d4d4">=</span><span style="color:#ce9178">"radio"</span><span style="color:#d4d4d4"> </span><span style="color:#9cdcfe">name</span><span style="color:#d4d4d4">=</span><span style="color:#ce9178">"carrier"</span><span style="color:#d4d4d4"> </span><span style="color:#9cdcfe">value</span><span style="color:#d4d4d4">=</span><span style="color:#ce9178">"dhl"</span><span style="color:#d4d4d4"> </span><span style="color:#808080">&gt;</span></div>
<div class="t m" style="left:-1.1999999999999886px;top:133.70px;width:24px;text-align:right;font-weight:normal;color:#c6c6c6">30</div>
<div class="t m" style="left:34.70px;top:133.70px"><span style="color:#d4d4d4">            </span><span style="color:#808080">&lt;</span><span style="color:#569cd6">input</span><span style="color:#d4d4d4"> </span><span style="color:#9cdcfe">type</span><span style="color:#d4d4d4">=</span><span style="color:#ce9178">"radio"</span><span style="color:#d4d4d4"> </span><span style="color:#9cdcfe">name</span><span style="color:#d4d4d4">=</span><span style="color:#ce9178">"carrier"</span><span style="color:#d4d4d4"> </span><span style="color:#9cdcfe">value</span><span style="color:#d4d4d4">=</span><span style="color:#ce9178">"hermes"</span><span style="color:#d4d4d4"> </span><span style="color:#808080">&gt;</span></div>
<div class="t m" style="left:-1.1999999999999886px;top:144.53px;width:24px;text-align:right;font-weight:normal;color:#858585">31</div>
<div class="t m" style="left:34.70px;top:144.53px"><span style="color:#d4d4d4">            </span><span style="color:#808080">&lt;</span><span style="color:#569cd6">input</span><span style="color:#d4d4d4"> </span><span style="color:#9cdcfe">type</span><span style="color:#d4d4d4">=</span><span style="color:#ce9178">"submit"</span><span style="color:#808080">&gt;</span></div>
<div class="t m" style="left:-1.1999999999999886px;top:155.36px;width:24px;text-align:right;font-weight:normal;color:#858585">32</div>
<div class="t m" style="left:34.70px;top:155.36px"><span style="color:#d4d4d4">        </span><span style="color:#808080">&lt;/</span><span style="color:#569cd6">form</span><span style="color:#808080">&gt;</span></div>
<div class="t m" style="left:-1.1999999999999886px;top:166.19px;width:24px;text-align:right;font-weight:normal;color:#858585">33</div>
<div class="t m" style="left:34.70px;top:166.19px"></div>
<div class="t m" style="left:-1.1999999999999886px;top:177.02px;width:24px;text-align:right;font-weight:normal;color:#858585">34</div>
<div class="t m" style="left:34.70px;top:177.02px"><span style="color:#d4d4d4">        </span><span style="color:#808080">&lt;</span><span style="color:#569cd6">table</span><span style="color:#808080">&gt;</span></div>
<div class="t m" style="left:-1.1999999999999886px;top:187.85px;width:24px;text-align:right;font-weight:normal;color:#858585">35</div>
<div class="t m" style="left:34.70px;top:187.85px"><span style="color:#d4d4d4">            </span><span style="color:#808080">&lt;</span><span style="color:#569cd6">tr</span><span style="color:#808080">&gt;</span></div>
<div class="t m" style="left:-1.1999999999999886px;top:198.68px;width:24px;text-align:right;font-weight:normal;color:#858585">36</div>
<div class="t m" style="left:34.70px;top:198.68px"><span style="color:#d4d4d4">                </span><span style="color:#808080">&lt;</span><span style="color:#569cd6">th</span><span style="color:#808080">&gt;</span><span style="color:#d4d4d4">Shipment</span><span style="color:#808080">&lt;/</span><span style="color:#569cd6">th</span><span style="color:#808080">&gt;</span></div>
<div class="t m" style="left:-1.1999999999999886px;top:209.51px;width:24px;text-align:right;font-weight:normal;color:#858585">37</div>
<div class="t m" style="left:34.70px;top:209.51px"><span style="color:#d4d4d4">                </span><span style="color:#808080">&lt;</span><span style="color:#569cd6">th</span><span style="color:#808080">&gt;</span><span style="color:#d4d4d4">Status</span><span style="color:#808080">&lt;/</span><span style="color:#569cd6">th</span><span style="color:#808080">&gt;</span></div>
<div class="t m" style="left:-1.1999999999999886px;top:220.34px;width:24px;text-align:right;font-weight:normal;color:#858585">38</div>
<div class="t m" style="left:34.70px;top:220.34px"><span style="color:#d4d4d4">                </span><span style="color:#808080">&lt;</span><span style="color:#569cd6">th</span><span style="color:#808080">&gt;</span><span style="color:#d4d4d4">Updated</span><span style="color:#808080">&lt;/</span><span style="color:#569cd6">th</span><span style="color:#808080">&gt;</span></div>
<div class="t m" style="left:-1.1999999999999886px;top:231.17px;width:24px;text-align:right;font-weight:normal;color:#858585">39</div>
<div class="t m" style="left:34.70px;top:231.17px"><span style="color:#d4d4d4">                </span><span style="color:#808080">&lt;</span><span style="color:#569cd6">th</span><span style="color:#808080">&gt;</span><span style="color:#d4d4d4">Carrier</span><span style="color:#808080">&lt;/</span><span style="color:#569cd6">th</span><span style="color:#808080">&gt;</span></div>
<div class="t m" style="left:-1.1999999999999886px;top:242.00px;width:24px;text-align:right;font-weight:normal;color:#858585">40</div>
<div class="t m" style="left:34.70px;top:242.00px"><span style="color:#d4d4d4">            </span><span style="color:#808080">&lt;/</span><span style="color:#569cd6">tr</span><span style="color:#808080">&gt;</span></div>
<div class="t m" style="left:-1.1999999999999886px;top:252.83px;width:24px;text-align:right;font-weight:normal;color:#858585">41</div>
<div class="t m" style="left:34.70px;top:252.83px"><span style="color:#d4d4d4">            </span><span style="color:#808080">&lt;</span><span style="color:#569cd6">tr</span><span style="color:#d4d4d4"> </span><span style="color:#9cdcfe">v-for</span><span style="color:#d4d4d4">=</span><span style="color:#ce9178">"shipment in shipments"</span><span style="color:#808080">&gt;</span></div>
<div class="t m" style="left:-1.1999999999999886px;top:263.66px;width:24px;text-align:right;font-weight:normal;color:#858585">42</div>
<div class="t m" style="left:34.70px;top:263.66px"><span style="color:#d4d4d4">                </span><span style="color:#808080">&lt;</span><span style="color:#569cd6">td</span><span style="color:#808080">&gt;</span><span style="color:#d4d4d4">{{ shipment.trackingId }}</span><span style="color:#808080">&lt;/</span><span style="color:#569cd6">td</span><span style="color:#808080">&gt;</span></div>
<div class="t m" style="left:-1.1999999999999886px;top:274.49px;width:24px;text-align:right;font-weight:normal;color:#858585">43</div>
<div class="t m" style="left:34.70px;top:274.49px"><span style="color:#d4d4d4">                </span><span style="color:#808080">&lt;</span><span style="color:#569cd6">td</span><span style="color:#808080">&gt;</span><span style="color:#d4d4d4">{{ shipment.history.length }}</span><span style="color:#808080">&lt;/</span><span style="color:#569cd6">td</span><span style="color:#808080">&gt;</span></div>
<div class="t m" style="left:-1.1999999999999886px;top:285.32px;width:24px;text-align:right;font-weight:normal;color:#858585">44</div>
<div class="t m" style="left:34.70px;top:285.32px"><span style="color:#d4d4d4">                </span><span style="color:#808080">&lt;</span><span style="color:#569cd6">td</span><span style="color:#808080">&gt;</span><span style="color:#d4d4d4">{{ shipment.createdAt }}</span><span style="color:#808080">&lt;/</span><span style="color:#569cd6">td</span><span style="color:#808080">&gt;</span></div>
<div class="t m" style="left:-1.1999999999999886px;top:296.15px;width:24px;text-align:right;font-weight:normal;color:#858585">45</div>
<div class="t m" style="left:34.70px;top:296.15px"><span style="color:#d4d4d4">                </span><span style="color:#808080">&lt;</span><span style="color:#569cd6">td</span><span style="color:#808080">&gt;</span><span style="color:#d4d4d4">{{ shipment.carrier }}</span><span style="color:#808080">&lt;/</span><span style="color:#569cd6">td</span><span style="color:#808080">&gt;</span></div>
<div class="t m" style="left:-1.1999999999999886px;top:306.98px;width:24px;text-align:right;font-weight:normal;color:#858585">46</div>
<div class="t m" style="left:34.70px;top:306.98px"><span style="color:#d4d4d4">            </span><span style="color:#808080">&lt;/</span><span style="color:#569cd6">tr</span><span style="color:#808080">&gt;</span></div>
<div class="t m" style="left:-1.1999999999999886px;top:317.81px;width:24px;text-align:right;font-weight:normal;color:#858585">47</div>
<div class="t m" style="left:34.70px;top:317.81px"><span style="color:#d4d4d4">        </span><span style="color:#808080">&lt;/</span><span style="color:#569cd6">table</span><span style="color:#808080">&gt;</span></div>
<div class="t m" style="left:-1.1999999999999886px;top:328.64px;width:24px;text-align:right;font-weight:normal;color:#858585">48</div>
<div class="t m" style="left:34.70px;top:328.64px"><span style="color:#d4d4d4">    </span><span style="color:#808080">&lt;/</span><span style="color:#569cd6">div</span><span style="color:#808080">&gt;</span></div>
<div class="t m" style="left:-1.1999999999999886px;top:339.47px;width:24px;text-align:right;font-weight:normal;color:#858585">49</div>
<div class="t m" style="left:34.70px;top:339.47px"><span style="color:#d4d4d4">    </span><span style="color:#808080">&lt;</span><span style="color:#569cd6">script</span><span style="color:#808080">&gt;</span></div>
<div class="t m" style="left:-1.1999999999999886px;top:350.30px;width:24px;text-align:right;font-weight:normal;color:#858585">50</div>
<div class="t m" style="left:34.70px;top:350.30px"><span style="color:#d4d4d4">        </span><span style="color:#569cd6">var</span><span style="color:#d4d4d4"> </span><span style="color:#9cdcfe">app</span><span style="color:#d4d4d4"> = </span><span style="color:#569cd6">new</span><span style="color:#d4d4d4"> </span><span style="color:#4ec9b0">Vue</span><span style="color:#e0d8b0">({</span></div>
<div class="t m" style="left:-1.1999999999999886px;top:361.13px;width:24px;text-align:right;font-weight:normal;color:#858585">51</div>
<div class="t m" style="left:34.70px;top:361.13px"><span style="color:#d4d4d4">            </span><span style="color:#9cdcfe">data</span><span style="color:#d4d4d4">: </span><span style="color:#e0d8b0">{</span></div>
<div class="t m" style="left:-1.1999999999999886px;top:371.96px;width:24px;text-align:right;font-weight:normal;color:#858585">52</div>
<div class="t m" style="left:34.70px;top:371.96px"><span style="color:#d4d4d4">                </span><span style="color:#9cdcfe">shipments</span><span style="color:#d4d4d4">: []</span></div>
<div class="a" style="left:297.40px;top:133.00px;width:0.90px;height:9.00px;background:#aeafad"></div>
</div>
<div class="a" style="left:761.50px;top:36.00px;width:6.50px;height:367.00px;background:#1e1e1e;border-left:0.8px solid #2b2b2b"></div>
<div class="a" style="left:762.30px;top:99.00px;width:5.70px;height:131.00px;background:#424242"></div>
<div class="a" style="left:345.00px;top:403.00px;width:361.00px;height:3.70px;background:#474747"></div>
<div class="a" style="left:291.00px;top:406.70px;width:477.00px;height:9.30px;background:#007acc"></div>
<svg class="a" style="left:296.50px;top:409.20px" width="5" height="5" viewBox="0 0 10 10"><circle cx="5" cy="5" r="5" fill="#fff"/><path d="M3 3 L7 7 M7 3 L3 7" stroke="#007acc" stroke-width="1.3"/></svg>
<div class="t" style="left:302.50px;top:409.50px;font-size:5.4px;color:#fff;transform:scaleX(0.933)">0</div>
<svg class="a" style="left:306.70px;top:409.00px" width="6" height="5.4" viewBox="0 0 12 11"><path d="M6 0 L12 11 H0 Z" fill="#fff"/><path d="M6 4 V7.5 M6 8.8 V10" stroke="#007acc" stroke-width="1.2"/></svg>
<div class="t" style="left:313.30px;top:409.50px;font-size:5.4px;color:#fff;transform:scaleX(0.900)">0</div>
<svg class="a" style="left:323.50px;top:409.00px" width="5.6" height="5.6" viewBox="0 0 12 12"><circle cx="6" cy="6" r="5.2" fill="none" stroke="#fff" stroke-width="1.4"/><path d="M3 6.5 L6 3.5 L9 6.5 V9 H3 Z" fill="#fff"/></svg>
<div class="t" style="left:573.60px;top:409.50px;font-size:5.4px;color:#fff;transform:scaleX(0.823)">Ln 30, Col 61</div>
<div class="t" style="left:606.50px;top:409.50px;font-size:5.4px;color:#fff;transform:scaleX(0.813)">Spaces: 4</div>
<div class="t" style="left:633.00px;top:409.50px;font-size:5.4px;color:#fff;transform:scaleX(0.847)">UTF-8 with BOM</div>
<div class="t" style="left:674.00px;top:409.50px;font-size:5.4px;color:#fff;transform:scaleX(0.710)">CRLF</div>
<div class="t" style="left:691.00px;top:409.50px;font-size:5.4px;color:#fff;transform:scaleX(0.851)">HTML</div>
<div class="t" style="left:715.00px;top:409.50px;font-size:5.4px;color:#fff;transform:scaleX(0.910)">Port : 5500</div>
<svg class="a" style="left:709.50px;top:409.10px" width="5.2" height="5.2" viewBox="0 0 12 12"><circle cx="6" cy="6" r="5.2" fill="none" stroke="#fff" stroke-width="1.4"/><path d="M3.5 8.5 L8.5 3.5" stroke="#fff" stroke-width="1.4"/></svg>
<div class="a" style="left:745.80px;top:409.20px;width:5.00px;height:5.00px;background:#fff;border-radius:50%"></div>
<svg class="a" style="left:757.30px;top:408.90px" width="5" height="5.6" viewBox="0 0 10 11"><path d="M5 0 C2 0 1.5 3 1.5 5 L0 8.5 H10 L8.5 5 C8.5 3 8 0 5 0 Z M3.5 9.5 H6.5 L5 11 Z" fill="#fff"/></svg>
<div class="a" style="left:538.00px;top:278.00px;width:225.50px;height:14.30px;background:#1f1f1f"></div>
<div class="a" style="left:538.00px;top:292.30px;width:225.50px;height:14.90px;background:#242424"></div>
<div class="a" style="left:538.00px;top:307.20px;width:225.50px;height:12.10px;background:#212121"></div>
<div class="a" style="left:538.00px;top:319.30px;width:225.50px;height:15.00px;background:#252525"></div>
<div class="a" style="left:538.00px;top:334.30px;width:225.50px;height:12.10px;background:#222222"></div>
<div class="a" style="left:538.00px;top:291.80px;width:225.50px;height:1.00px;background:#161616"></div>
<div class="a" style="left:538.00px;top:306.70px;width:225.50px;height:1.00px;background:#161616"></div>
<div class="a" style="left:538.00px;top:318.80px;width:225.50px;height:1.00px;background:#161616"></div>
<div class="a" style="left:538.00px;top:333.80px;width:225.50px;height:1.00px;background:#161616"></div>
<div class="a" style="left:538.00px;top:345.90px;width:225.50px;height:1.00px;background:#161616"></div>
<div class="a" style="left:540.50px;top:282.50px;width:9.30px;height:9.30px;background:#1f9e5a"></div>
<svg class="a" style="left:541.50px;top:283.50px" width="7.3" height="7.3" viewBox="0 0 10 10"><path d="M9 1 L3 7" stroke="#eafbe8" stroke-width="1.6"/><path d="M1.5 6 L4 8.5 M1 9 L2.5 7.5" stroke="#eafbe8" stroke-width="1.2"/></svg>
<div class="a" style="left:551.50px;top:282.50px;width:9.30px;height:9.30px;background:#6441a4"></div>
<svg class="a" style="left:552.70px;top:283.60px" width="7" height="7" viewBox="0 0 24 24"><path d="M12 1 L15 9 L23.5 9.3 L16.8 14.6 L19.2 23 L12 18.2 L4.8 23 L7.2 14.6 L0.5 9.3 L9 9 Z" fill="#fff"/></svg>
<svg class="a" style="left:562.00px;top:282.50px" width="8.8" height="9.3" viewBox="0 0 10 10"><rect x="0.5" y="3" width="9" height="7" fill="#4fc7ae"/><rect x="4.3" y="2.5" width="1.4" height="7.5" fill="#1f1f1f"/><rect x="0.5" y="5.2" width="9" height="0.8" fill="#1f1f1f"/><path d="M5 3 C3 0 1 1 2.5 3 M5 3 C7 0 9 1 7.5 3" fill="none" stroke="#4fc7ae" stroke-width="1"/></svg>
<div class="t" style="left:572.00px;top:284.20px;font-size:7.0px;color:#2bc71b;font-weight:bold;transform:scaleX(1.054)">sebaro11</div>
<div class="t" style="left:604.30px;top:284.20px;font-size:7.0px;color:#aaaaaa;transform:scaleX(0.768)">:</div>
<svg class="a" style="left:607.30px;top:279.00px" width="15" height="14.5" viewBox="0 0 30 29"><rect x="0" y="0" width="30" height="29" fill="#efe2b0"/><path d="M0 0 H30 V12 C25 5 20 9 15 4 C10 9 5 5 0 12 Z" fill="#e9d58a"/><ellipse cx="15" cy="19" rx="11" ry="9" fill="#fbe9da"/><path d="M8 16 Q10 14 12 16 M18 16 Q20 14 22 16" stroke="#6a4a3a" stroke-width="1.2" fill="none"/><ellipse cx="15" cy="23" rx="2.5" ry="2" fill="#c96060"/><ellipse cx="8" cy="20" rx="2.5" ry="1.3" fill="#f6b6b0"/><ellipse cx="22" cy="20" rx="2.5" ry="1.3" fill="#f6b6b0"/></svg>
<div class="a" style="left:540.50px;top:297.50px;width:9.30px;height:9.30px;background:#6441a4"></div>
<svg class="a" style="left:541.70px;top:298.60px" width="7" height="7" viewBox="0 0 24 24"><path d="M12 1 L15 9 L23.5 9.3 L16.8 14.6 L19.2 23 L12 18.2 L4.8 23 L7.2 14.6 L0.5 9.3 L9 9 Z" fill="#fff"/></svg>
<div class="a" style="left:551.50px;top:297.50px;width:9.30px;height:9.30px;background:#1d94d0"></div>
<svg class="a" style="left:552.90px;top:299.80px" width="6.5" height="5" viewBox="0 0 13 10"><path d="M0 1 L3.5 5 L6.5 0 L9.5 5 L13 1 V10 H0 Z" fill="#fff"/></svg>
<div class="t" style="left:562.50px;top:299.20px;font-size:7.0px;color:#2e8fd8;font-weight:bold;transform:scaleX(0.994)">ClocxHD</div>
<div class="t" style="left:591.80px;top:299.20px;font-size:7.0px;color:#aaaaaa;transform:scaleX(0.768)">:</div>
<svg class="a" style="left:595.50px;top:294.00px" width="15" height="14.5" viewBox="0 0 30 29"><rect x="0" y="0" width="30" height="29" fill="#efe2b0"/><path d="M0 0 H30 V12 C25 5 20 9 15 4 C10 9 5 5 0 12 Z" fill="#e9d58a"/><ellipse cx="15" cy="19" rx="11" ry="9" fill="#fbe9da"/><path d="M8 16 Q10 14 12 16 M18 16 Q20 14 22 16" stroke="#6a4a3a" stroke-width="1.2" fill="none"/><ellipse cx="15" cy="23" rx="2.5" ry="2" fill="#c96060"/><ellipse cx="8" cy="20" rx="2.5" ry="1.3" fill="#f6b6b0"/><ellipse cx="22" cy="20" rx="2.5" ry="1.3" fill="#f6b6b0"/></svg>
<div class="a" style="left:540.50px;top:310.00px;width:9.30px;height:9.30px;background:#6441a4"></div>
<svg class="a" style="left:541.70px;top:311.10px" width="7" height="7" viewBox="0 0 24 24"><path d="M12 1 L15 9 L23.5 9.3 L16.8 14.6 L19.2 23 L12 18.2 L4.8 23 L7.2 14.6 L0.5 9.3 L9 9 Z" fill="#fff"/></svg>
<div class="a" style="left:551.50px;top:310.00px;width:9.30px;height:9.30px;background:#1d94d0"></div>
<svg class="a" style="left:552.90px;top:312.30px" width="6.5" height="5" viewBox="0 0 13 10"><path d="M0 1 L3.5 5 L6.5 0 L9.5 5 L13 1 V10 H0 Z" fill="#fff"/></svg>
<div class="t" style="left:562.50px;top:311.70px;font-size:7.0px;color:#e03a36;font-weight:bold;transform:scaleX(1.003)">syncxp</div>
<div class="t" style="left:587.00px;top:311.70px;font-size:7.0px;color:#d6d6d6;transform:scaleX(0.997)">: warte was</div>
<div class="a" style="left:540.50px;top:324.50px;width:9.30px;height:9.30px;background:#1d94d0"></div>
<svg class="a" style="left:541.90px;top:326.80px" width="6.5" height="5" viewBox="0 0 13 10"><path d="M0 1 L3.5 5 L6.5 0 L9.5 5 L13 1 V10 H0 Z" fill="#fff"/></svg>
<div class="t" style="left:551.00px;top:326.20px;font-size:7.0px;color:#e9dcae;font-weight:bold;transform:scaleX(1.033)">Alexv</div>
<div class="t" style="left:570.60px;top:326.20px;font-size:7.0px;color:#aaaaaa;transform:scaleX(0.717)">:</div>
<svg class="a" style="left:574.00px;top:321.00px" width="15" height="14.5" viewBox="0 0 30 29"><rect x="0" y="0" width="30" height="29" fill="#efe2b0"/><path d="M0 0 H30 V12 C25 5 20 9 15 4 C10 9 5 5 0 12 Z" fill="#e9d58a"/><ellipse cx="15" cy="19" rx="11" ry="9" fill="#fbe9da"/><path d="M8 16 Q10 14 12 16 M18 16 Q20 14 22 16" stroke="#6a4a3a" stroke-width="1.2" fill="none"/><ellipse cx="15" cy="23" rx="2.5" ry="2" fill="#c96060"/><ellipse cx="8" cy="20" rx="2.5" ry="1.3" fill="#f6b6b0"/><ellipse cx="22" cy="20" rx="2.5" ry="1.3" fill="#f6b6b0"/></svg>
<div class="a" style="left:540.50px;top:336.00px;width:9.30px;height:9.30px;background:#6441a4"></div>
<svg class="a" style="left:541.70px;top:337.10px" width="7" height="7" viewBox="0 0 24 24"><path d="M12 1 L15 9 L23.5 9.3 L16.8 14.6 L19.2 23 L12 18.2 L4.8 23 L7.2 14.6 L0.5 9.3 L9 9 Z" fill="#fff"/></svg>
<div class="a" style="left:551.50px;top:336.00px;width:9.30px;height:9.30px;background:#1d94d0"></div>
<svg class="a" style="left:552.90px;top:338.30px" width="6.5" height="5" viewBox="0 0 13 10"><path d="M0 1 L3.5 5 L6.5 0 L9.5 5 L13 1 V10 H0 Z" fill="#fff"/></svg>
<div class="t" style="left:562.50px;top:337.70px;font-size:7.0px;color:#e03a36;font-weight:bold;transform:scaleX(1.003)">syncxp</div>
<div class="t" style="left:587.00px;top:337.70px;font-size:7.0px;color:#d6d6d6;transform:scaleX(1.012)">: war das voice to weeb voice?</div>
<div class="a" style="left:0.00px;top:416.00px;width:768.00px;height:16.00px;background:linear-gradient(90deg,#203039 0%,#1e2b37 45%,#1a2334 100%)"></div>
<svg class="a" style="left:6.00px;top:420.20px" width="7.5" height="7.5" viewBox="0 0 10 10"><path d="M0 1.4 L4.2 0.8 V4.7 H0 Z M4.9 0.7 L10 0 V4.7 H4.9 Z M0 5.3 H4.2 V9.2 L0 8.6 Z M4.9 5.3 H10 V10 L4.9 9.3 Z" fill="#f0f0f0"/></svg>
<svg class="a" style="left:25.00px;top:421.00px" width="8" height="7" viewBox="0 0 16 14"><rect x="3" y="1" width="10" height="12" fill="none" stroke="#e0e0e0" stroke-width="1.5"/><path d="M0.8 3 V11 M15.2 3 V11" stroke="#e0e0e0" stroke-width="1.5"/></svg>
<div class="a" style="left:44.20px;top:419.00px;width:10.00px;height:10.00px;background:#9fcd46"></div>
<div class="t" style="left:47.60px;top:419.20px;font-size:8.8px;color:#275010;font-family:"Liberation Serif",serif;font-weight:bold">&#x3BB;</div>
<svg class="a" style="left:64.00px;top:419.50px" width="9.5" height="8.5" viewBox="0 0 19 17"><path d="M0 2 H7 L9 4 H19 V17 H0 Z" fill="#e8b13a"/><rect x="0" y="6" width="19" height="11" fill="#f7d36f"/><rect x="3" y="11" width="13" height="4" fill="#3c8bd6"/></svg>
<div class="a" style="left:82.50px;top:430.80px;width:58.50px;height:1.20px;background:#86b8e6"></div>
<svg class="a" style="left:82.55px;top:419.60px" width="9" height="9" viewBox="0 0 20 20"><circle cx="10" cy="10" r="9.5" fill="#5b8ae6"/><circle cx="10" cy="10" r="4.6" fill="#3d6fd0" stroke="#dfe9ff" stroke-width="1.4"/></svg>
<div class="t" style="left:93.75px;top:422.30px;font-size:5.6px;color:#ffffff;transform:scaleX(0.802)">ASP.NET Core - Jso...</div>
<div class="a" style="left:144.50px;top:430.80px;width:61.50px;height:1.20px;background:#86b8e6"></div>
<svg class="a" style="left:146.80px;top:419.60px" width="9" height="9" viewBox="0 0 20 20"><circle cx="10" cy="10" r="9.5" fill="#5b8ae6"/><circle cx="10" cy="10" r="4.6" fill="#3d6fd0" stroke="#dfe9ff" stroke-width="1.4"/></svg>
<div class="t" style="left:158.00px;top:422.30px;font-size:5.6px;color:#ffffff;transform:scaleX(0.799)">Versand Tracks0r - ...</div>
<div class="a" style="left:208.75px;top:430.80px;width:61.25px;height:1.20px;background:#86b8e6"></div>
<svg class="a" style="left:210.80px;top:419.60px" width="9" height="9" viewBox="0 0 20 20"><circle cx="10" cy="10" r="9.5" fill="#db4437"/><path d="M10 10 L1.8 14.75 A9.5 9.5 0 0 1 1.8 5.25 Z" fill="#db4437"/><path d="M10 10 L1.8 14.75 A9.5 9.5 0 0 0 18.2 14.75 Z" fill="#0f9d58"/><path d="M10 10 L18.2 14.75 A9.5 9.5 0 0 0 18.2 5.25 Z" fill="#f4b400"/><path d="M10 10 L18.2 5.25 A9.5 9.5 0 0 0 10 0.5 Z" fill="#f4b400"/><circle cx="10" cy="10" r="4.6" fill="#4285f4" stroke="#fff" stroke-width="1.4"/></svg>
<div class="t" style="left:222.00px;top:422.30px;font-size:5.6px;color:#ffffff;transform:scaleX(0.783)">PEPEGA BOARD - G...</div>
<div class="a" style="left:274.00px;top:430.80px;width:60.00px;height:1.20px;background:#86b8e6"></div>
<svg class="a" style="left:275.80px;top:419.50px" width="9" height="9" viewBox="0 0 24 24"><path d="M17.5 0.5 L23.5 3.3 V20.7 L17.5 23.5 L6.8 13.7 L2.2 17.2 L0.5 16.3 V7.7 L2.2 6.8 L6.8 10.3 Z M17.5 6.5 L11.3 12 L17.5 17.5 Z M2.8 9.5 V14.5 L5.3 12 Z" fill="#9a62d8" fill-rule="evenodd"/></svg>
<div class="t" style="left:287.00px;top:422.30px;font-size:5.6px;color:#ffffff;transform:scaleX(0.856)">WebApplication11 ...</div>
<div class="a" style="left:336.00px;top:430.80px;width:61.50px;height:1.20px;background:#86b8e6"></div>
<svg class="a" style="left:340.05px;top:419.50px" width="9" height="9" viewBox="0 0 20 20"><circle cx="10" cy="10" r="9.3" fill="#161616" stroke="#c8c8c8" stroke-width="1"/><circle cx="10" cy="6" r="3" fill="none" stroke="#ddd" stroke-width="1.3"/><circle cx="6.5" cy="12.5" r="3" fill="none" stroke="#ddd" stroke-width="1.3"/><circle cx="13.5" cy="12.5" r="3" fill="none" stroke="#ddd" stroke-width="1.3"/></svg>
<div class="t" style="left:351.25px;top:422.30px;font-size:5.6px;color:#ffffff;transform:scaleX(0.809)">OBS 23.2.1 (64-bit, ...</div>
<div class="a" style="left:400.00px;top:430.80px;width:62.00px;height:1.20px;background:#86b8e6"></div>
<svg class="a" style="left:406.30px;top:419.50px" width="9" height="9" viewBox="0 0 24 24"><path d="M17.5 0.5 L23.5 3.3 V20.7 L17.5 23.5 L6.8 13.7 L2.2 17.2 L0.5 16.3 V7.7 L2.2 6.8 L6.8 10.3 Z M17.5 6.5 L11.3 12 L17.5 17.5 Z M2.8 9.5 V14.5 L5.3 12 Z" fill="#9a62d8" fill-rule="evenodd"/></svg>
<div class="t" style="left:417.50px;top:422.30px;font-size:5.6px;color:#ffffff;transform:scaleX(0.807)">VersandTracks0r (R...</div>
<div class="a" style="left:466.00px;top:430.80px;width:61.50px;height:1.20px;background:#86b8e6"></div>
<svg class="a" style="left:471.00px;top:419.80px" width="9" height="8" viewBox="0 0 18 16"><rect x="0" y="0" width="18" height="16" fill="#e8e8e8"/><rect x="0" y="0" width="18" height="3" fill="#5f87b0"/><rect x="2" y="5" width="5" height="9" fill="#3f7f3a"/><rect x="9" y="5" width="7" height="2" fill="#9aa"/></svg>
<div class="t" style="left:480.00px;top:422.30px;font-size:5.6px;color:#ffffff;transform:scaleX(0.869)">WebApplication11</div>
<div class="a" style="left:528.75px;top:416.00px;width:63.75px;height:16.00px;background:#3b4753"></div>
<div class="a" style="left:528.75px;top:430.80px;width:63.75px;height:1.20px;background:#86b8e6"></div>
<svg class="a" style="left:532.75px;top:419.50px" width="9" height="9" viewBox="0 0 24 24"><path d="M17.5 0.5 L23.5 3.3 V20.7 L17.5 23.5 L6.8 13.7 L2.2 17.2 L0.5 16.3 V7.7 L2.2 6.8 L6.8 10.3 Z M17.5 6.5 L11.3 12 L17.5 17.5 Z M2.8 9.5 V14.5 L5.3 12 Z" fill="#2aa0f5" fill-rule="evenodd"/></svg>
<div class="t" style="left:543.75px;top:422.30px;font-size:5.6px;color:#ffffff;transform:scaleX(0.943)">index.html - www...</div>
<div class="a" style="left:595.00px;top:430.80px;width:61.00px;height:1.20px;background:#86b8e6"></div>
<svg class="a" style="left:600.25px;top:419.80px" width="9" height="8" viewBox="0 0 18 16"><rect x="0" y="0" width="18" height="16" fill="#5b2d91"/><rect x="0" y="0" width="18" height="3" fill="#9c7cc8"/><path d="M3 6 L6 8.5 L3 11" stroke="#ddd" stroke-width="1.2" fill="none"/></svg>
<div class="t" style="left:608.75px;top:422.30px;font-size:5.6px;color:#ffffff;transform:scaleX(0.752)">C:\Users\streamer\so...</div>
<svg class="a" style="left:677.50px;top:421.50px" width="5" height="3" viewBox="0 0 10 6"><path d="M1 5.5 L5 1 L9 5.5" fill="none" stroke="#ddd" stroke-width="1.4"/></svg>
<svg class="a" style="left:686.50px;top:420.50px" width="7" height="6.5" viewBox="0 0 14 13"><rect x="3" y="1" width="10" height="8" fill="none" stroke="#ddd" stroke-width="1.3"/><rect x="0.5" y="4" width="4" height="7" fill="#1d2836" stroke="#ddd" stroke-width="1.2"/></svg>
<svg class="a" style="left:695.30px;top:421.00px" width="7" height="6" viewBox="0 0 14 12"><path d="M0 4 H3 L7 0.5 V11.5 L3 8 H0 Z" fill="#ddd"/><path d="M9 3.5 C10.5 5 10.5 7 9 8.5 M11 2 C13 4 13 8 11 10" fill="none" stroke="#ddd" stroke-width="1"/></svg>
<div class="t" style="left:706.70px;top:422.60px;font-size:5.5px;color:#f0f0f0;transform:scaleX(0.763)">ENG</div>
<div class="t" style="left:727.50px;top:418.70px;font-size:5.5px;color:#f0f0f0;transform:scaleX(0.785)">18:36</div>
<div class="t" style="left:721.20px;top:426.10px;font-size:5.5px;color:#f0f0f0;transform:scaleX(0.846)">03/08/2019</div>
<svg class="a" style="left:751.00px;top:419.50px" width="9.5" height="9.5" viewBox="0 0 19 19"><path d="M1 1 H15 V11 H6 L3 14 V11 H1 Z" fill="none" stroke="#f0f0f0" stroke-width="1.5"/><circle cx="13.5" cy="13.5" r="4.5" fill="#1a2334" stroke="#f0f0f0" stroke-width="1.2"/><path d="M13.5 11.5 V15.5" stroke="#f0f0f0" stroke-width="1.2"/></svg></body></html>
